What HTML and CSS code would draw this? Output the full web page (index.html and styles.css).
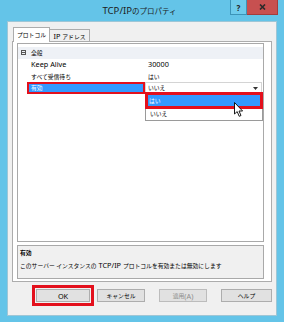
FILE: index.html
```html
<!DOCTYPE html>
<html lang="ja">
<head>
<meta charset="utf-8">
<title>TCP/IPのプロパティ</title>
<link rel="stylesheet" href="styles.css">
</head>
<body>
<div class="window">
  <div class="titlebar">
    <div class="title">TCP/IP<span class="jt">のプロパティ</span></div>
    <div class="caption-btns">
      <div class="cbtn help">?</div>
      <div class="cbtn close">
        <svg width="7" height="6" viewBox="0 0 7 6"><path d="M1 0.5 L6 5.5 M6 0.5 L1 5.5" stroke="#2a2a2a" stroke-width="1.6"/></svg>
      </div>
    </div>
  </div>
  <div class="client">
    <div class="tabs">
      <div class="tab active"><span class="ja">プロトコル</span></div>
      <div class="tab inactive">IP&nbsp;<span class="ja">アドレス</span></div>
    </div>
    <div class="panel">
      <div class="grid">
        <div class="row cat">
          <div class="gutter"><span class="minus"></span></div>
          <div class="label"><span class="ja">全般</span></div>
        </div>
        <div class="row">
          <div class="gutter"></div>
          <div class="label">Keep Alive</div>
          <div class="value">30000</div>
        </div>
        <div class="row">
          <div class="gutter"></div>
          <div class="label"><span class="ja">すべて受信待ち</span></div>
          <div class="value"><span class="ja">はい</span></div>
        </div>
        <div class="row">
          <div class="gutter"></div>
          <div class="label selected"><span class="ja">有効</span></div>
          <div class="value combo">
            <span class="ja">いいえ</span>
            <svg class="arrow" width="5" height="3" viewBox="0 0 5 3"><path d="M0 0 H5 L2.5 3 Z" fill="#333"/></svg>
            <div class="dropdown">
              <div class="opt sel"><span class="ja">はい</span></div>
              <div class="opt"><span class="ja">いいえ</span></div>
            </div>
          </div>
        </div>
      </div>
      <div class="desc">
        <div class="desc-title"><span class="ja">有効</span></div>
        <div class="desc-text"><span class="ja">このサーバー インスタンスの</span> TCP/IP <span class="ja">プロトコルを有効または無効にします</span></div>
      </div>
    </div>
    <div class="btns">
      <div class="btn ok">OK</div>
      <div class="btn cancel"><span class="ja">キャンセル</span></div>
      <div class="btn apply disabled"><span class="ja">適用</span>(A)</div>
      <div class="btn helpbtn"><span class="ja">ヘルプ</span></div>
    </div>
  </div>
  <svg class="cursor" width="10" height="16" viewBox="0 0 10 16">
    <path d="M0.5 0.5 L0.5 12 L3.2 9.6 L5.2 14.3 L7 13.5 L5 9 L8.6 9 Z" fill="#fff" stroke="#000" stroke-width="0.9" stroke-linejoin="round"/>
  </svg>
</div>
</body>
</html>
```
FILE: styles.css
```css
* { box-sizing: border-box; }
html, body { margin: 0; padding: 0; }
body {
  width: 284px;
  height: 322px;
  overflow: hidden;
  background: #ffffff;
  font-family: "Noto Sans", "Noto Sans CJK JP", sans-serif;
  font-size: 7.3px;
  color: #000;
}
.ja { font-size: 5.8px; }

.window {
  position: relative;
  width: 284px;
  height: 322px;
  background: #64c4e8;
  padding: 0 7px 6px 7px;
  display: flex;
  flex-direction: column;
}

.titlebar {
  height: 21px;
  flex: none;
  display: grid;
}
.title {
  grid-area: 1 / 1;
  align-self: center;
  text-align: center;
  font-size: 9.6px;
  color: #1c1c1c;
  padding-right: 5px;
  padding-bottom: 1px;
}
.title .jt { font-size: 7.5px; }
.caption-btns {
  grid-area: 1 / 1;
  justify-self: end;
  align-self: start;
  display: flex;
  margin-right: -1px;
}
.cbtn {
  height: 15px;
  display: flex;
  align-items: center;
  justify-content: center;
}
.help {
  width: 17px;
  background: #6ecbec;
  border: 1px solid #3c94b8;
  border-top: none;
  font-weight: bold;
  font-size: 8px;
  color: #202020;
}
.close {
  width: 31px;
  background: #c75050;
  border: 1px solid #a33c3c;
  border-top: none;
  border-left: none;
}

.client {
  flex: 1;
  background: #f0f0f0;
  border: 1px solid #9ec6d6;
  padding: 5px 4px 0 4px;
  display: flex;
  flex-direction: column;
}

.tabs {
  display: flex;
  align-items: flex-end;
  height: 15px;
  margin-bottom: -1px;
  margin-left: 1px;
  position: relative;
  z-index: 1;
}
.tab {
  border: 1px solid #acacac;
  border-bottom: none;
  display: flex;
  align-items: center;
  justify-content: center;
  white-space: nowrap;
}
.tab.active {
  width: 37px;
  height: 15px;
  background: #fff;
  padding-bottom: 1px;
}
.tab.inactive {
  width: 41px;
  height: 13px;
  margin-left: -1px;
  background: #f0f0f0;
  border-bottom: 1px solid #acacac;
  padding-top: 1px;
}

.panel {
  height: 241px;
  background: #fff;
  border: 1px solid #acacac;
  padding: 1px 7px 0 4px;
  display: flex;
  flex-direction: column;
}

.grid {
  height: 199px;
  border: 1px solid #a9a9a9;
  padding-top: 3px;
  flex: none;
}
.row {
  display: flex;
  height: 11.75px;
  line-height: 11.75px;
}
.row.cat { background: #eef1f6; }
.gutter {
  width: 9px;
  flex: none;
  display: flex;
  align-items: center;
}
.minus {
  display: block;
  width: 5px;
  height: 5px;
  margin-left: 3px;
  border: 1px solid #555;
  background: linear-gradient(#555, #555) center / 3px 1px no-repeat;
}
.label {
  width: 118px;
  flex: none;
  padding-left: 4px;
  white-space: nowrap;
}
.label.selected {
  background: #3399ff;
  color: #fff;
  box-shadow: inset 0 0 0 2px #e3101c;
}
.value {
  flex: 1;
  padding-left: 3px;
  white-space: nowrap;
  position: relative;
}
.combo {
  border: 1px solid #d4d4d4;
  margin-right: 1px;
  padding-left: 2px;
  display: flex;
  align-items: center;
  justify-content: space-between;
  padding-right: 3px;
  line-height: 9px;
}
.arrow { display: block; }
.dropdown {
  position: absolute;
  top: 9px;
  left: -1px;
  width: 118px;
  height: 29px;
  background: #fff;
  border: 1px solid #9a9a9a;
  padding-top: 2px;
  z-index: 2;
}
.opt {
  height: 11px;
  line-height: 11px;
  padding-left: 2px;
  margin: 0 2px 2px 2px;
}
.opt.sel {
  background: #3399ff;
  color: #fff;
  outline: 3px solid #e3101c;
  outline-offset: 0;
  padding-left: 1px;
}

.desc {
  margin-top: 3px;
  height: 34px;
  border: 1px solid #a9a9a9;
  background: #f0f0f0;
  padding: 1px 2px 0 2px;
  line-height: 11.5px;
}
.desc-title { font-weight: bold; }

.btns {
  display: flex;
  margin-top: 7px;
  padding-left: 24px;
  height: 13px;
}
.btn {
  height: 13px;
  background: #e1e1e1;
  border: 1px solid #adadad;
  display: flex;
  align-items: center;
  justify-content: center;
}
.btn.ok {
  width: 54px;
  outline: 3px solid #e3101c;
  outline-offset: 1px;
}
.btn.cancel { width: 48px; margin-left: 7px; }
.btn.apply { width: 48px; margin-left: 14px; }
.btn.helpbtn { width: 51px; margin-left: 14px; }
.btn.disabled { color: #8e8e8e; border-color: #bcbcbc; }

.cursor {
  position: absolute;
  left: 234px;
  top: 102px;
  z-index: 5;
}
```
